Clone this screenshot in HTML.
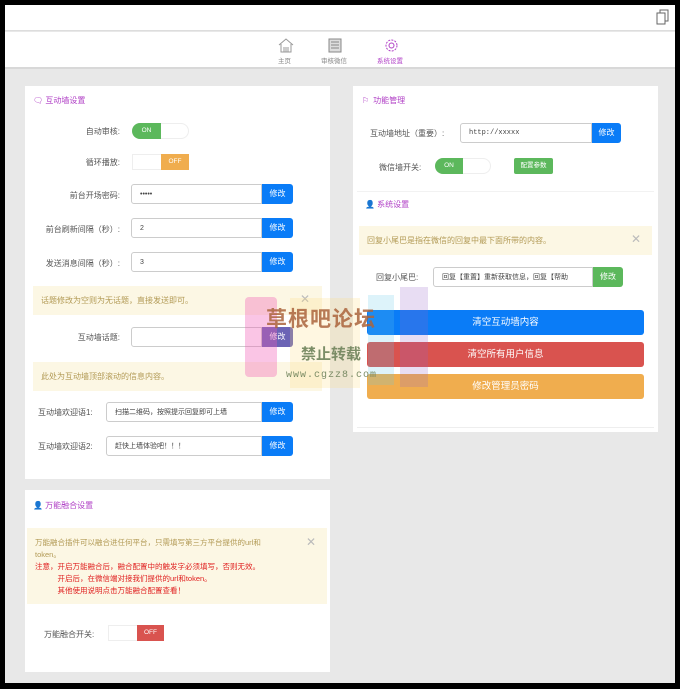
<!DOCTYPE html>
<html><head><meta charset="utf-8"><style>
*{margin:0;padding:0;box-sizing:border-box}
body{width:680px;height:689px;background:#000;font-family:"Liberation Sans","Noto Sans CJK SC",sans-serif;font-size:8px;color:#555;position:relative;overflow:hidden}
.a{position:absolute}
#win{left:5px;top:5px;width:670px;height:678px;background:#e8e8e8}
.hdr{left:5px;top:5px;width:670px;height:26px;background:#fff;border-bottom:1px solid #ddd}
.nav{left:5px;top:32px;width:670px;height:37px;background:#fff;border-bottom:2px solid #d8d8d8}
.panel{background:#fff}
.title{font-size:8px;color:#b03fc6}
.lbl{font-size:8px;color:#555;text-align:right}
.inp{background:#fff;border:1px solid #ccc;border-radius:3px 0 0 3px;height:20px;font-size:7px;color:#444;padding-left:8px;display:flex;align-items:center;white-space:nowrap;overflow:hidden}
.btn{height:20px;background:#0a7cf7;color:#fff;font-size:8px;text-align:center;line-height:20px;border-radius:0 3px 3px 0}
.alert{background:#fcf7e4;color:#b29a55;font-size:8px;padding-left:8px}
.x{color:#bbb;font-size:12px}
.tg{height:16px;border:1px solid #eee;border-radius:8px;background:#fff}
.big{height:25px;border-radius:3px;color:#fff;text-align:center;line-height:25px;font-size:9.5px}
</style></head><body>
<div class="a" id="win"></div>
<div class="a hdr"></div>
<svg class="a" style="left:656px;top:9px" width="13" height="16" viewBox="0 0 13 16"><rect x="1" y="4" width="8" height="11" fill="none" stroke="#666"/><path d="M4 4V1h8v11H9" fill="none" stroke="#666"/></svg>
<div class="a nav"></div>
<svg class="a" style="left:278px;top:38px" width="16" height="15" viewBox="0 0 16 15"><path d="M1 7L8 1l7 6M3 6v8h10V6M6 14V9M10 14V9M8 14V9" fill="none" stroke="#999"/></svg>
<div class="a" style="left:278px;top:55px;font-size:6.5px;color:#888">主页</div>
<svg class="a" style="left:328px;top:38px" width="14" height="15" viewBox="0 0 14 15"><rect x="1" y="1" width="12" height="13" fill="#ddd" stroke="#888"/><path d="M3 4h8M3 7h8M3 10h8" stroke="#888"/></svg>
<div class="a" style="left:321px;top:55px;font-size:6.5px;color:#888">审核微信</div>
<svg class="a" style="left:384px;top:38px" width="15" height="15" viewBox="0 0 15 15"><circle cx="7.5" cy="7.5" r="5.5" fill="none" stroke="#b03fc6" stroke-dasharray="2 1.2"/><circle cx="7.5" cy="7.5" r="2.5" fill="none" stroke="#b03fc6"/></svg>
<div class="a" style="left:377px;top:55px;font-size:6.5px;color:#b03fc6">系统设置</div>

<div class="a panel" style="left:25px;top:86px;width:305px;height:393px"></div>
<div class="a title" style="left:33px;top:95px">🗨 互动墙设置</div>
<div class="a lbl" style="left:40px;top:126px;width:80px">自动审核:</div>
<div class="a tg" style="left:132px;top:123px;width:57px"></div>
<div class="a" style="left:132px;top:123px;width:29px;height:16px;background:#5cb85c;border-radius:8px 0 0 8px;color:#fff;font-size:6.5px;text-align:center;line-height:16px">ON</div>
<div class="a lbl" style="left:40px;top:157px;width:80px">循环播放:</div>
<div class="a tg" style="left:132px;top:154px;width:57px;border-radius:0"></div>
<div class="a" style="left:161px;top:154px;width:28px;height:16px;background:#f0ad4e;color:#fff;font-size:6.5px;text-align:center;line-height:16px">OFF</div>
<div class="a lbl" style="left:30px;top:190px;width:90px">前台开场密码:</div>
<div class="a inp" style="left:131px;top:184px;width:131px">•••••</div><div class="a btn" style="left:262px;top:184px;width:31px">修改</div>
<div class="a lbl" style="left:20px;top:224px;width:100px">前台刷新间隔（秒）:</div>
<div class="a inp" style="left:131px;top:218px;width:131px">2</div><div class="a btn" style="left:262px;top:218px;width:31px">修改</div>
<div class="a lbl" style="left:20px;top:258px;width:100px">发送消息间隔（秒）:</div>
<div class="a inp" style="left:131px;top:252px;width:131px">3</div><div class="a btn" style="left:262px;top:252px;width:31px">修改</div>
<div class="a alert" style="left:33px;top:286px;width:289px;height:29px;line-height:29px">话题修改为空则为无话题，直接发送即可。</div>
<div class="a x" style="left:300px;top:292px">✕</div>
<div class="a lbl" style="left:30px;top:332px;width:90px">互动墙话题:</div>
<div class="a inp" style="left:131px;top:327px;width:131px"></div><div class="a btn" style="left:262px;top:327px;width:31px;background:#6b64b5">修改</div>
<div class="a alert" style="left:33px;top:362px;width:289px;height:29px;line-height:29px">此处为互动墙顶部滚动的信息内容。</div>
<div class="a lbl" style="left:38px;top:407px;text-align:left">互动墙欢迎语1:</div>
<div class="a inp" style="left:106px;top:402px;width:156px">扫描二维码，按照提示回复即可上墙</div><div class="a btn" style="left:262px;top:402px;width:31px">修改</div>
<div class="a lbl" style="left:38px;top:441px;text-align:left">互动墙欢迎语2:</div>
<div class="a inp" style="left:106px;top:436px;width:156px">赶快上墙体验吧！！！</div><div class="a btn" style="left:262px;top:436px;width:31px">修改</div>

<div class="a panel" style="left:25px;top:490px;width:305px;height:182px"></div>
<div class="a title" style="left:33px;top:500px">👤 万能融合设置</div>
<div class="a alert" style="left:27px;top:528px;width:300px;height:76px;padding-top:9px;line-height:12px;font-size:7.5px">万能融合插件可以融合进任何平台，只需填写第三方平台提供的url和<br>token。<br><span style="color:#e02020">注意，开启万能融合后，融合配置中的触发字必须填写，否则无效。<br>&emsp;&emsp;&emsp;开启后，在微信端对接我们提供的url和token。<br>&emsp;&emsp;&emsp;其他使用说明点击万能融合配置查看！</span></div>
<div class="a x" style="left:306px;top:535px">✕</div>
<div class="a lbl" style="left:44px;top:629px;text-align:left">万能融合开关:</div>
<div class="a tg" style="left:108px;top:625px;width:56px;border-radius:0"></div>
<div class="a" style="left:137px;top:625px;width:27px;height:16px;background:#d9534f;color:#fff;font-size:6.5px;text-align:center;line-height:16px">OFF</div>

<div class="a panel" style="left:353px;top:86px;width:305px;height:346px"></div>
<div class="a" style="left:357px;top:427px;width:297px;height:1px;background:#eee"></div>
<div class="a title" style="left:362px;top:95px">⚐&ensp;功能管理</div>
<div class="a lbl" style="left:370px;top:128px;text-align:left">互动墙地址（重要）:</div>
<div class="a inp" style="left:460px;top:123px;width:132px;font-family:'Liberation Mono',monospace">http://xxxxx</div><div class="a btn" style="left:592px;top:123px;width:29px">修改</div>
<div class="a lbl" style="left:379px;top:162px;text-align:left">微信墙开关:</div>
<div class="a tg" style="left:435px;top:158px;width:56px"></div>
<div class="a" style="left:435px;top:158px;width:28px;height:16px;background:#5cb85c;border-radius:8px 0 0 8px;color:#fff;font-size:6.5px;text-align:center;line-height:16px">ON</div>
<div class="a" style="left:514px;top:158px;width:39px;height:16px;background:#5cb85c;border-radius:2px;color:#fff;font-size:6.5px;text-align:center;line-height:16px">配置参数</div>
<div class="a" style="left:357px;top:191px;width:297px;height:1px;background:#f2f2f2"></div>
<div class="a title" style="left:365px;top:199px">👤 系统设置</div>
<div class="a alert" style="left:359px;top:226px;width:293px;height:29px;line-height:29px">回复小尾巴是指在微信的回复中最下面所带的内容。</div>
<div class="a x" style="left:631px;top:232px">✕</div>
<div class="a lbl" style="left:376px;top:272px;text-align:left">回复小尾巴:</div>
<div class="a inp" style="left:433px;top:267px;width:160px">回复【重置】重新获取信息，回复【帮助</div><div class="a btn" style="left:593px;top:267px;width:30px;background:#5cb85c">修改</div>
<div class="a big" style="left:367px;top:310px;width:277px;background:#0a7cf7">清空互动墙内容</div>
<div class="a big" style="left:367px;top:342px;width:277px;background:#d9534f">清空所有用户信息</div>
<div class="a big" style="left:367px;top:374px;width:277px;background:#f0ad4e">修改管理员密码</div>

<div class="a" style="left:245px;top:297px;width:32px;height:80px;background:rgba(240,90,180,.35);border-radius:4px"></div>
<div class="a" style="left:290px;top:298px;width:70px;height:90px;background:rgba(255,220,120,.22)"></div>
<div class="a" style="left:368px;top:295px;width:26px;height:90px;background:rgba(100,200,230,.22)"></div>
<div class="a" style="left:400px;top:287px;width:28px;height:100px;background:rgba(150,100,200,.22)"></div>
<div class="a" style="left:266px;top:303px;font-size:21px;font-weight:bold;color:rgba(170,100,60,.85);letter-spacing:1px">草根吧论坛</div>
<div class="a" style="left:301px;top:343px;font-size:15px;font-weight:bold;color:rgba(110,130,90,.9)">禁止转载</div>
<div class="a" style="left:286px;top:370px;font-size:10px;color:rgba(110,130,90,.9);font-family:'Liberation Mono',monospace;letter-spacing:1px">www.cgzz8.com</div>
</body></html>
